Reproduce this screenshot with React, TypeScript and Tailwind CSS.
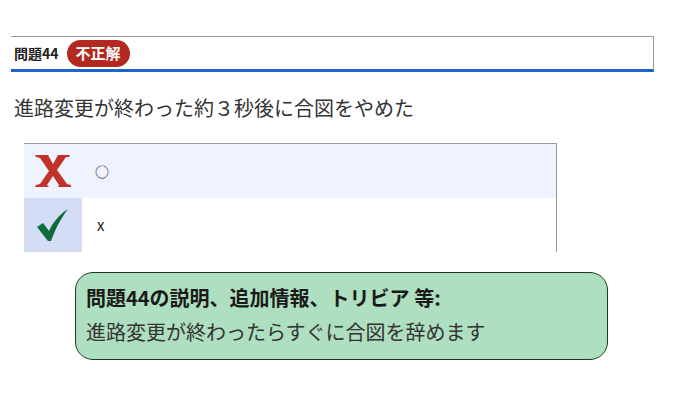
const jp = '[font-family:"Noto_Sans_CJK_JP","Noto_Sans",sans-serif]';

function CrossIcon() {
  return (
    <svg width="40" height="36" viewBox="0 0 40 36" aria-hidden="true">
      <path
        d="M2 2 H15 L20 11 L25 2 H37 L36 4 L33 4 L24 17 L34 31 L38 32 L38 34 H25 L26 32 L20 23 L14 32 L16 34 H2 L3 32 L7 31 L16 18 L7 5 L3 4 Z"
        fill="#c0322a"
      />
    </svg>
  );
}

function CheckIcon() {
  return (
    <svg width="34" height="34" viewBox="0 0 34 34" aria-hidden="true">
      <path
        d="M1 19 L7 15 L13 23 C17 14 23 7 32 1 C26 9 20 19 15 33 L12 33 Z"
        fill="#0d6b3c"
      />
    </svg>
  );
}

export default function App() {
  return (
    <div className={`${jp} bg-white w-[675px] h-[400px] pt-9 pl-[11px]`}>
      <div className="w-[643px] h-[36px] border-t border-r border-[#9a9a9a] border-b-[3px] border-b-[#1b66cc] flex items-center pl-[3px] gap-2">
        <span className="text-[14px] font-bold text-[#222]">問題44</span>
        <span className="h-[27px] px-[9px] rounded-full bg-[#b3281f] text-white text-[15px] font-bold flex items-center">
          不正解
        </span>
      </div>

      <p className="mt-[22px] pl-[3px] text-[20px] leading-[28px] text-[#333]">
        進路変更が終わった約３秒後に合図をやめた
      </p>

      <div className="ml-[13px] mt-[21px] w-[533px] border-t border-r border-[#9a9a9a]">
        <div className="flex h-[54px] bg-[#eef3ff]">
          <div className="w-[58px] flex items-center justify-center">
            <CrossIcon />
          </div>
          <div className="flex items-center pl-[13px] text-[14px] text-[#222]">○</div>
        </div>
        <div className="flex h-[54px] bg-white">
          <div className="w-[58px] bg-[#d3ddf6] flex items-center justify-center">
            <CheckIcon />
          </div>
          <div className="flex items-center pl-[15px] text-[15px] text-[#222]">x</div>
        </div>
      </div>

      <div className="ml-[64px] mt-[20px] w-[533px] h-[88px] rounded-[18px] border border-[#1f3a1f] bg-[#aedfc0] pl-[10px] pt-[12px]">
        <div className="text-[20px] font-bold leading-[26px] text-[#1a1a1a]">
          問題44の説明、追加情報、トリビア 等:
        </div>
        <div className="mt-[7px] text-[20px] leading-[28px] text-[#333]">
          進路変更が終わったらすぐに合図を辞めます
        </div>
      </div>
    </div>
  );
}
